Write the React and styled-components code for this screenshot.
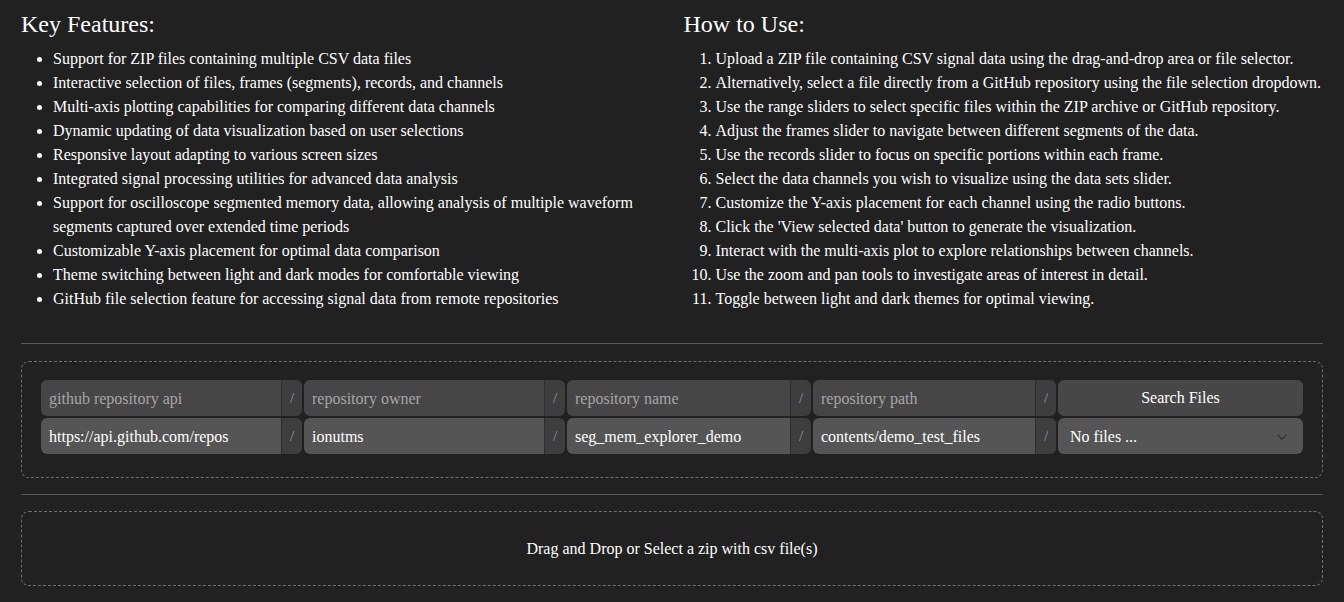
import React from 'react';
import styled, { createGlobalStyle } from 'styled-components';

const GlobalStyle = createGlobalStyle`
  html, body {
    margin: 0;
    padding: 0;
    background: #212121;
    color: #ffffff;
    font-family: 'Liberation Serif', 'Times New Roman', serif;
  }
`;

const Page = styled.div`
  padding: 11px 21px 16px;
`;

const Columns = styled.div`
  display: grid;
  grid-template-columns: 1fr 1fr;
  column-gap: 23px;
`;

const Section = styled.section``;

const Heading = styled.h2`
  margin: 0 0 9px;
  font-size: 24px;
  font-weight: normal;
  line-height: normal;
`;

const List = styled.ul`
  margin: 0;
  padding-left: 32px;
  font-size: 16px;
  line-height: 24px;
  list-style: ${p => (p.ordered ? 'decimal' : 'disc')};
`;

const Rule = styled.hr`
  border: 0;
  border-top: 1px solid #5a5a5a;
  margin: ${p => p.top || 16}px 0 ${p => p.bottom || 17}px;
`;

const DashedBox = styled.div`
  border: 1px dashed #6f6f6f;
  border-radius: 8px;
`;

const RepoBox = styled(DashedBox)`
  padding: 18px 19px 23px;
  display: grid;
  grid-template-columns: 261fr 261fr 244fr 243fr 245fr;
  grid-auto-rows: 36px;
  gap: 2px;
`;

const Group = styled.div`
  display: flex;
  min-width: 0;
`;

const Field = styled.div`
  flex: 1;
  min-width: 0;
  display: flex;
  align-items: center;
  padding: 1px 8px 0;
  background: ${p => (p.filled ? '#555555' : '#464646')};
  color: ${p => (p.filled ? '#ffffff' : '#a5a5a5')};
  border-radius: 6px 0 0 6px;
  font-size: 16px;
  white-space: nowrap;
  overflow: hidden;
`;

const Slash = styled.div`
  width: 20px;
  flex: none;
  display: flex;
  align-items: center;
  justify-content: center;
  background: #3e3e3e;
  border-left: 1px solid #2e2e2e;
  border-radius: 0 6px 6px 0;
  color: #8e9aa4;
  font-size: 15px;
`;

const SearchButton = styled.button`
  background: #474747;
  color: #ffffff;
  border: 0;
  border-radius: 6px;
  padding-top: 1px;
  font-family: 'Liberation Serif', 'Times New Roman', serif;
  font-size: 16px;
  cursor: pointer;
`;

const Select = styled.div`
  display: flex;
  align-items: center;
  justify-content: space-between;
  padding: 1px 14px 0 12px;
  background: #555555;
  border-radius: 6px;
  font-size: 16px;
`;

const DropZone = styled(DashedBox)`
  height: 73px;
  display: flex;
  align-items: center;
  justify-content: center;
  font-size: 16px;
`;

const features = [
  'Support for ZIP files containing multiple CSV data files',
  'Interactive selection of files, frames (segments), records, and channels',
  'Multi-axis plotting capabilities for comparing different data channels',
  'Dynamic updating of data visualization based on user selections',
  'Responsive layout adapting to various screen sizes',
  'Integrated signal processing utilities for advanced data analysis',
  'Support for oscilloscope segmented memory data, allowing analysis of multiple waveform segments captured over extended time periods',
  'Customizable Y-axis placement for optimal data comparison',
  'Theme switching between light and dark modes for comfortable viewing',
  'GitHub file selection feature for accessing signal data from remote repositories',
];

const steps = [
  'Upload a ZIP file containing CSV signal data using the drag-and-drop area or file selector.',
  'Alternatively, select a file directly from a GitHub repository using the file selection dropdown.',
  'Use the range sliders to select specific files within the ZIP archive or GitHub repository.',
  'Adjust the frames slider to navigate between different segments of the data.',
  'Use the records slider to focus on specific portions within each frame.',
  'Select the data channels you wish to visualize using the data sets slider.',
  'Customize the Y-axis placement for each channel using the radio buttons.',
  "Click the 'View selected data' button to generate the visualization.",
  'Interact with the multi-axis plot to explore relationships between channels.',
  'Use the zoom and pan tools to investigate areas of interest in detail.',
  'Toggle between light and dark themes for optimal viewing.',
];

const repoFields = [
  { label: 'github repository api', value: 'https://api.github.com/repos' },
  { label: 'repository owner', value: 'ionutms' },
  { label: 'repository name', value: 'seg_mem_explorer_demo' },
  { label: 'repository path', value: 'contents/demo_test_files' },
];

function Chevron() {
  return (
    <svg width="14" height="14" viewBox="0 0 24 24" fill="none" stroke="#333" strokeWidth="2.2" strokeLinecap="round" strokeLinejoin="round">
      <path d="M5 9l7 7 7-7" />
    </svg>
  );
}

export default function App() {
  return (
    <Page>
      <GlobalStyle />
      <Columns>
        <Section>
          <Heading>Key Features:</Heading>
          <List>
            {features.map(f => (
              <li key={f}>{f}</li>
            ))}
          </List>
        </Section>
        <Section>
          <Heading>How to Use:</Heading>
          <List as="ol" ordered>
            {steps.map(s => (
              <li key={s}>{s}</li>
            ))}
          </List>
        </Section>
      </Columns>

      <Rule top={32} />

      <RepoBox>
        {repoFields.map(f => (
          <Group key={f.label}>
            <Field>{f.label}</Field>
            <Slash>/</Slash>
          </Group>
        ))}
        <SearchButton type="button">Search Files</SearchButton>
        {repoFields.map(f => (
          <Group key={f.value}>
            <Field filled>{f.value}</Field>
            <Slash>/</Slash>
          </Group>
        ))}
        <Select>
          <span>No files ...</span>
          <Chevron />
        </Select>
      </RepoBox>

      <Rule bottom={16} />

      <DropZone>Drag and Drop or Select a zip with csv file(s)</DropZone>
    </Page>
  );
}
